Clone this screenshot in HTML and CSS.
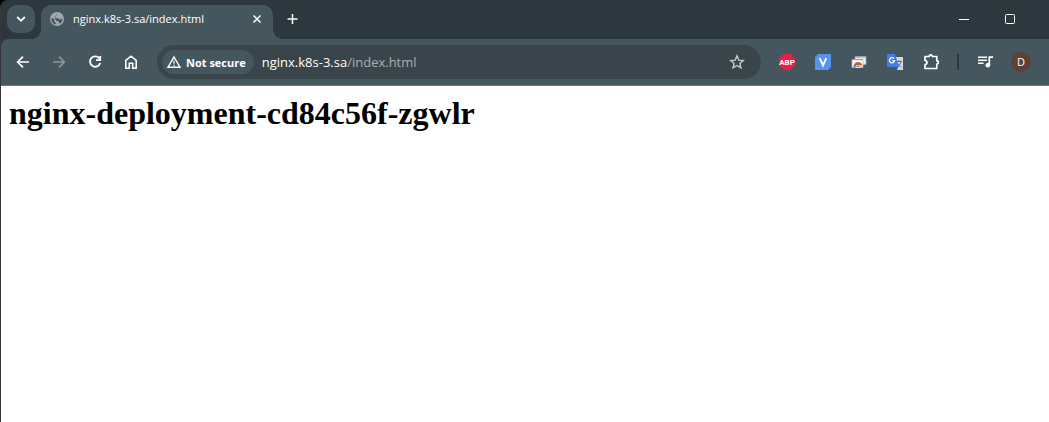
FILE: index.html
```html
<!DOCTYPE html>
<html lang="en">
<head>
<meta charset="utf-8">
<meta name="viewport" content="width=device-width, initial-scale=1">
<title>nginx.k8s-3.sa/index.html</title>
<link rel="stylesheet" href="styles.css">
</head>
<body>
<div class="window">
  <header class="tabstrip">
    <button class="tab-search" aria-label="Search tabs">
      <svg width="16" height="16" viewBox="0 0 16 16"><path d="M4.2 6l3.800 3.800L11.800 6" fill="none" stroke="#fff" stroke-width="1.8"/></svg>
    </button>
    <div class="tab">
      <svg class="favicon" width="16" height="16" viewBox="0 0 16 16"><circle cx="8" cy="8" r="7" fill="#a2a9ad"/><path d="M8.800 2.300L7.300 3.700v1.200L5.800 5.700v1.500h3.400l1 1.400 1.800-.3 1.600-.8a5.600 5.600 0 0 1-3.400 5.300v-1.500L8.700 10H7.200V8.800L2.400 7a5.600 5.600 0 0 0 4.400 6.500v-1.600L5.200 10.300V8.500z" fill="#46565f"/></svg>
      <span class="tab-title">nginx.k8s-3.sa/index.html</span>
      <button class="tab-close" aria-label="Close tab">
        <svg width="16" height="16" viewBox="0 0 16 16"><path d="M4.500 4.500l7 7m0-7l-7 7" stroke="#fff" stroke-width="1.5"/></svg>
      </button>
    </div>
    <button class="new-tab" aria-label="New tab">
      <svg width="16" height="16" viewBox="0 0 16 16"><path d="M2.500 8h10M7.500 3v10" stroke="#fff" stroke-width="1.500"/></svg>
    </button>
    <div class="window-controls">
      <button class="window-button" aria-label="Minimize"><svg width="12" height="12" viewBox="0 0 12 12"><path d="M1 6.500h10" stroke="#fff"/></svg></button>
      <button class="window-button" aria-label="Maximize"><svg width="12" height="12" viewBox="0 0 12 12"><rect x="1.500" y="1.500" width="9" height="9" rx="1" fill="none" stroke="#fff"/></svg></button>
    </div>
  </header>

  <nav class="toolbar">
    <div class="group">
      <button class="tool" aria-label="Back"><svg width="16" height="16" viewBox="0 0 16 16"><path d="M14 8H3M8 2.700L2.700 8 8 13.300" fill="none" stroke="#fff" stroke-width="1.700"/></svg></button>
      <button class="tool" aria-label="Forward" disabled><svg width="16" height="16" viewBox="0 0 16 16"><path d="M2 8h11M8 2.700L13.300 8 8 13.300" fill="none" stroke="#8b969c" stroke-width="1.700"/></svg></button>
      <button class="tool" aria-label="Reload"><svg width="16" height="16" viewBox="0 0 16 16"><path d="M12.600 4.700A5.200 5.200 0 1 0 13.200 9" fill="none" stroke="#fff" stroke-width="1.800"/><path d="M13.200 2v4.200H9" fill="none" stroke="#fff" stroke-width="1.800"/></svg></button>
      <button class="tool" aria-label="Home"><svg width="16" height="16" viewBox="0 0 16 16"><path d="M2.800 14.200V6.400L8 2.200l5.200 4.200v7.800H9.700V9.300H6.300v4.900z" fill="none" stroke="#fff" stroke-width="1.600"/></svg></button>
    </div>
    <div class="address">
      <button class="chip"><svg width="16" height="16" viewBox="0 0 16 16"><path d="M8 3l6 10.200H2z" fill="none" stroke="#fff" stroke-width="1.400"/><path d="M8 6.500v3.300M8 10.700V12" stroke="#fff" stroke-width="1.200"/></svg><span>Not secure</span></button>
      <a class="url" href="#">nginx.k8s-3.sa<span class="url-path">/index.html</span></a>
      <button class="star" aria-label="Bookmark this page"><svg width="16" height="16" viewBox="0 0 16 16"><path d="M8 1.900l1.800 4.200 4.500.4-3.400 3 1 4.400L8 11.500l-3.900 2.400 1-4.400-3.400-3 4.500-.4z" fill="none" stroke="#c7cbcd" stroke-width="1.400"/></svg></button>
    </div>
    <div class="group">
      <button class="tool" aria-label="Adblock Plus"><svg width="16" height="16" viewBox="0 0 16 16"><path d="M4.700 0h6.600L16 4.700v6.600L11.300 16H4.700L0 11.300V4.700z" fill="#ed1e45"/><text class="abp" x="8" y="11" text-anchor="middle">ABP</text></svg></button>
      <button class="tool" aria-label="V extension"><svg width="16" height="16" viewBox="0 0 16 16"><path d="M3 0h13v13l-3 3H0V3z" fill="#5496ef"/><path d="M4.700 4.200L8 11.500l3.300-7.300" fill="none" stroke="#fff" stroke-width="1.900"/></svg></button>
      <button class="tool" aria-label="Remote desktop"><svg width="16" height="16" viewBox="0 0 16 16"><path d="M4 2.500h11v8H4z" fill="#eee" stroke="#aaa" stroke-width=".7"/><path d="M4 3h11" stroke="#999"/><path d="M1 5.500h11v8H1z" fill="#f7f7f7" stroke="#bbb" stroke-width=".7"/><path d="M1 5.500h11" stroke="#999"/><path d="M2.500 13.500V12l1-2 3.500 3.500z" fill="#23a455"/><path d="M3 10.500a4.600 4.600 0 0 1 8.200 0L7 12.500z" fill="#df4637"/><path d="M11.200 10.500l.6 3H7z" fill="#fbc52c"/><path d="M4.800 13.500a2.200 2.200 0 0 1 4.400 0z" fill="#4285f4" stroke="#fff" stroke-width=".7"/></svg></button>
      <button class="tool" aria-label="Google Translate"><svg width="16" height="16" viewBox="0 0 16 16"><path d="M6 3h10v13H10z" fill="#d5d9dc"/><path d="M9 7.500h6M12 6v1.500M14 7.500c-.5 3-2 4.200-4 5.500M10.500 9c1 2 2.500 3.500 4 4.200" fill="none" stroke="#607079"/><path d="M8 12.500h3.500L10 16z" fill="#3157b7"/><path d="M1 0h7l4 13H1a1 1 0 0 1-1-1V1a1 1 0 0 1 1-1z" fill="#3f7ce8"/><path d="M7 4.600a2.600 2.600 0 1 0 .6 2.100H5.300" fill="none" stroke="#fff" stroke-width="1.200"/></svg></button>
      <button class="tool" aria-label="Extensions"><svg width="18" height="18" viewBox="0 0 18 18"><path d="M3 3.500h4.200a1.600 1.600 0 0 1 3.200 0h4.400v4.300a1.600 1.600 0 0 1 0 3.200v4.500H3v-3.800c2.600-.3 2.600-4 0-4.300z" fill="none" stroke="#fff" stroke-width="1.700" stroke-linejoin="round"/></svg></button>
      <span class="divider"></span>
      <button class="tool" aria-label="Media controls"><svg width="16" height="16" viewBox="0 0 16 16"><path d="M1 3.200h9M1 6.200h9M1 9.200h5.500" stroke="#fff" stroke-width="1.600"/><path d="M12.300 11V3.200H16" fill="none" stroke="#fff" stroke-width="1.700"/><circle cx="10.800" cy="11.200" r="2.300" fill="#fff"/></svg></button>
      <button class="tool" aria-label="Profile"><span class="avatar">D</span></button>
    </div>
  </nav>

  <main class="page">
    <h1>nginx-deployment-cd84c56f-zgwlr</h1>
  </main>
</div>
</body>
</html>
```
FILE: styles.css
```css
* {
  box-sizing: border-box;
}

body {
  margin: 0;
  background: #000;
  font-family: "Open Sans", "Noto Sans", sans-serif;
}

.window {
  display: flex;
  flex-direction: column;
  min-height: 100vh;
  border-left: 1px solid #35353b;
  border-top-left-radius: 8px;
  background: #2d383e;
  overflow: hidden;
}

button {
  display: flex;
  align-items: center;
  justify-content: center;
  padding: 0;
  border: 0;
  background: none;
  color: #fff;
  font: inherit;
}

svg {
  display: block;
  flex: none;
}

.tabstrip {
  display: flex;
  align-items: flex-start;
  height: 39px;
  padding: 5px 16px 0 6px;
}

.tab-search {
  width: 28px;
  height: 28px;
  margin-right: 6px;
  border-radius: 10px;
  background: #46565f;
}

.tab {
  position: relative;
  display: flex;
  align-items: center;
  gap: 8px;
  width: 232px;
  height: 34px;
  padding: 0 8px 6px;
  border-radius: 10px 10px 0 0;
  background: #46565f;
}

.tab::before,
.tab::after {
  content: "";
  position: absolute;
  bottom: 0;
  width: 10px;
  height: 10px;
}

.tab::before {
  right: 100%;
  background: radial-gradient(circle at 0 0, transparent 10px, #46565f 10px);
}

.tab::after {
  left: 100%;
  background: radial-gradient(circle at 100% 0, transparent 10px, #46565f 10px);
}

.tab-title {
  flex: 1;
  color: #fff;
  font-size: 11px;
  line-height: 16px;
  white-space: nowrap;
}

.new-tab {
  width: 28px;
  height: 28px;
  margin-left: 6px;
}

.window-controls {
  display: flex;
  margin-left: auto;
}

.window-button {
  width: 46px;
  height: 28px;
}

.toolbar {
  display: flex;
  align-items: center;
  gap: 12px;
  height: 47px;
  padding: 0 14px 0 8px;
  border-bottom: 1px solid #6d787f;
  border-top-left-radius: 8px;
  background: #46565f;
}

.group {
  display: flex;
  align-items: center;
  gap: 8px;
}

.tool {
  width: 28px;
  height: 28px;
}

.address {
  display: flex;
  flex: 1;
  align-items: center;
  gap: 8px;
  height: 34px;
  padding: 0 16px 0 5px;
  border-radius: 17px;
  background: #39454b;
}

.chip {
  gap: 4px;
  height: 24px;
  padding: 0 8px 0 4px;
  border-radius: 12px;
  background: #46565f;
  font-size: 11px;
  font-weight: 700;
  white-space: nowrap;
}

.url {
  flex: 1;
  color: #fff;
  font-size: 13px;
  line-height: 20px;
  text-decoration: none;
}

.url-path {
  color: #a9afb2;
}

.abp {
  fill: #fff;
  font-family: Roboto, sans-serif;
  font-size: 8px;
  font-weight: 700;
}

.divider {
  width: 2px;
  height: 16px;
  margin: 0 4px;
  background: #2d383e;
}

.avatar {
  display: grid;
  place-items: center;
  width: 20px;
  height: 20px;
  border-radius: 50%;
  background: #5d4037;
  font-size: 11px;
  line-height: 16px;
}

.page {
  flex: 1;
  padding: 8px;
  background: #fff;
}

h1 {
  margin: 0;
  color: #000;
  font-family: "Liberation Serif", serif;
  font-size: 32px;
  line-height: 38px;
}
```
